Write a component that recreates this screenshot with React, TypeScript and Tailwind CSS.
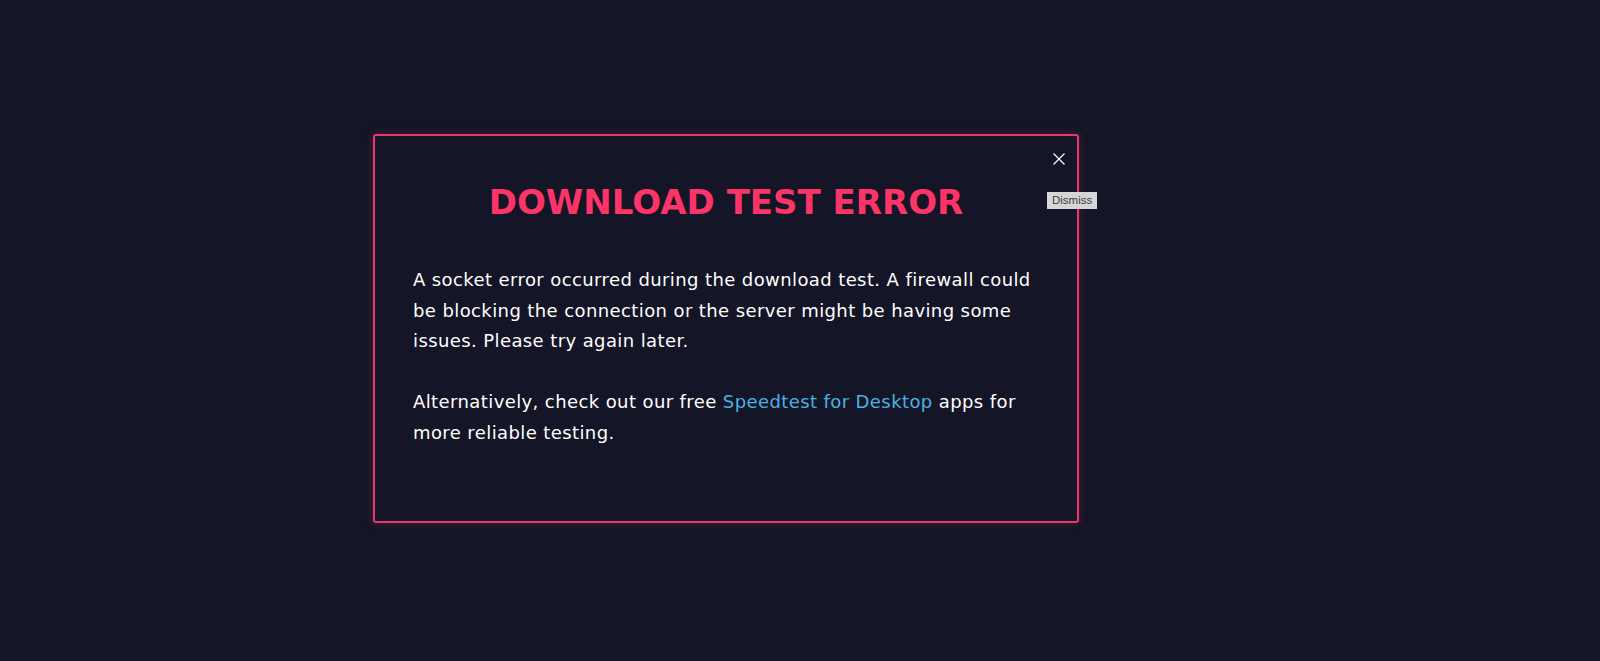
import React from "react";

export default function App() {
  return (
    <div className="w-[1600px] h-[661px] bg-[#141526] overflow-hidden flex items-start" style={{ fontFamily: '"DejaVu Sans", sans-serif' }}>
      <div className="ml-[373px] mt-[134px] w-[706px] h-[389px] border-2 border-[#e6396a] rounded-[3px] bg-[#141526] shadow-[0_0_8px_rgba(230,57,106,0.25)] flex flex-col relative">
        <button className="absolute right-[11px] top-[16px] w-[14px] h-[14px] flex items-center justify-center">
          <svg width="12" height="12" viewBox="0 0 12 12" fill="none" stroke="#ffffff" strokeWidth="1.2">
            <path d="M0.5 0.5 L11.5 11.5 M11.5 0.5 L0.5 11.5" />
          </svg>
        </button>
        <div className="absolute left-[672px] top-[56px] h-[17px] px-[5px] bg-[#d6d6d9] text-[#3c3c3c] text-[11.5px] leading-[17px]" style={{ fontFamily: '"Liberation Sans", sans-serif' }}>Dismiss</div>
        <h1 className="mt-[46px] text-center text-[#fc3468] font-bold text-[34px] leading-[40px]">DOWNLOAD TEST ERROR</h1>
        <div className="mt-[43px] px-[38px] text-white text-[18px] leading-[30.6px] tracking-[0.4px]">
          <p>A socket error occurred during the download test. A firewall could be blocking the connection or the server might be having some issues. Please try again later.</p>
          <p className="mt-[30.6px]">Alternatively, check out our free <a className="text-[#4bb1e3]">Speedtest for Desktop</a> apps for more reliable testing.</p>
        </div>
      </div>
    </div>
  );
}
